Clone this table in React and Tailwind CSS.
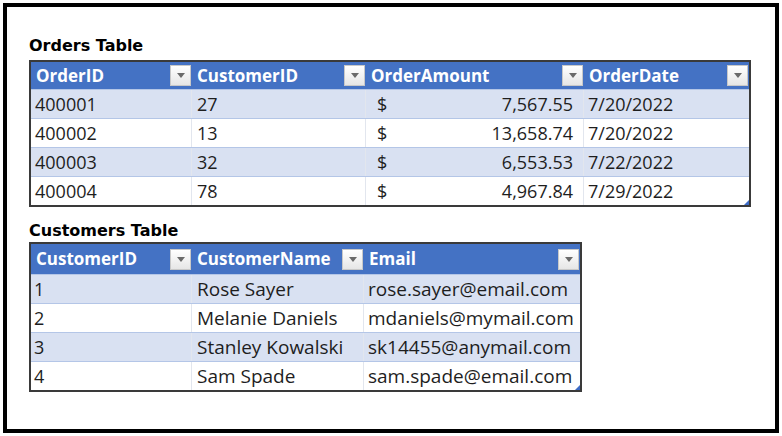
const orders = [
  ["400001", "27", "7,567.55", "7/20/2022"],
  ["400002", "13", "13,658.74", "7/20/2022"],
  ["400003", "32", "6,553.53", "7/22/2022"],
  ["400004", "78", "4,967.84", "7/29/2022"],
];

const customers = [
  ["1", "Rose Sayer", "rose.sayer@email.com"],
  ["2", "Melanie Daniels", "mdaniels@mymail.com"],
  ["3", "Stanley Kowalski", "sk14455@anymail.com"],
  ["4", "Sam Spade", "sam.spade@email.com"],
];

const Drop = () => (
  <span className="w-[21px] h-[21px] flex items-center justify-center bg-gradient-to-b from-white to-[#e6e6e6] border border-[#c8c8c8] shrink-0">
    <svg width="8" height="5" viewBox="0 0 8 5">
      <path d="M0 0H8L4 5Z" fill="#6a6a6a" />
    </svg>
  </span>
);

const HeadCell = ({ label, w }) => (
  <div className={`${w} flex items-center justify-between pl-[5px] pr-[1px] font-bold text-white text-[17px]`}>
    <span>{label}</span>
    <Drop />
  </div>
);

const Corner = () => (
  <svg className="absolute right-0 bottom-0" width="5" height="5" viewBox="0 0 5 5">
    <path d="M5 0V5H0Z" fill="#3d6bc6" />
  </svg>
);

const Title = ({ children, className }) => (
  <h2
    className={`font-bold text-[16px] leading-[24px] text-black ${className}`}
    style={{ fontFamily: "'DejaVu Sans', Verdana, sans-serif" }}
  >
    {children}
  </h2>
);

const App = () => {
  return (
    <div className="w-[782px] h-[436px] bg-white p-[3px]" style={{ fontFamily: "'Open Sans', sans-serif" }}>
      <div className="h-[430px] border-4 border-black px-[22px] pt-[27px] text-[#1e1e1e]">
        <Title>Orders Table</Title>
        <div className="relative w-[722px] border-2 border-[#3a3a3a] mt-[2px]">
          <div className="flex h-[27px] bg-[#4472c4]">
            <HeadCell label="OrderID" w="w-[161px]" />
            <HeadCell label="CustomerID" w="w-[174px]" />
            <HeadCell label="OrderAmount" w="w-[218px]" />
            <HeadCell label="OrderDate" w="w-[165px]" />
          </div>
          {orders.map((r, i) => (
            <div
              key={r[0]}
              className={`flex h-[29px] items-center text-[18px] border-t border-[#b4c6e7] ${i % 2 === 0 ? "bg-[#d9e1f2]" : "bg-white"}`}
            >
              <div className="w-[161px] h-full flex items-center pl-[4px] border-r border-[#e2e6ee]">{r[0]}</div>
              <div className="w-[174px] h-full flex items-center pl-[5px] border-r border-[#e2e6ee]">{r[1]}</div>
              <div className="w-[218px] h-full flex items-center justify-between pl-[11px] pr-[10px] border-r border-[#e2e6ee]">
                <span>$</span>
                <span>{r[2]}</span>
              </div>
              <div className="w-[165px] h-full flex items-center pl-[4px]">{r[3]}</div>
            </div>
          ))}
          <Corner />
        </div>

        <Title className="mt-[12px]">Customers Table</Title>
        <div className="relative w-[553px] border-2 border-[#3a3a3a] mt-[-1px]">
          <div className="flex h-[30px] bg-[#4472c4]">
            <HeadCell label="CustomerID" w="w-[161px]" />
            <HeadCell label="CustomerName" w="w-[172px]" />
            <HeadCell label="Email" w="w-[216px]" />
          </div>
          {customers.map((r, i) => (
            <div
              key={r[0]}
              className={`flex h-[29px] items-center text-[18px] border-t border-[#b4c6e7] ${i % 2 === 0 ? "bg-[#d9e1f2]" : "bg-white"}`}
            >
              <div className="w-[161px] h-full flex items-center pl-[3px] border-r border-[#e2e6ee]">{r[0]}</div>
              <div className="w-[172px] h-full flex items-center pl-[5px] text-[19px] border-r border-[#e2e6ee]">{r[1]}</div>
              <div className="w-[216px] h-full flex items-center pl-[4px] text-[19px] whitespace-nowrap overflow-hidden">{r[2]}</div>
            </div>
          ))}
          <Corner />
        </div>
      </div>
    </div>
  );
};

export default App;
